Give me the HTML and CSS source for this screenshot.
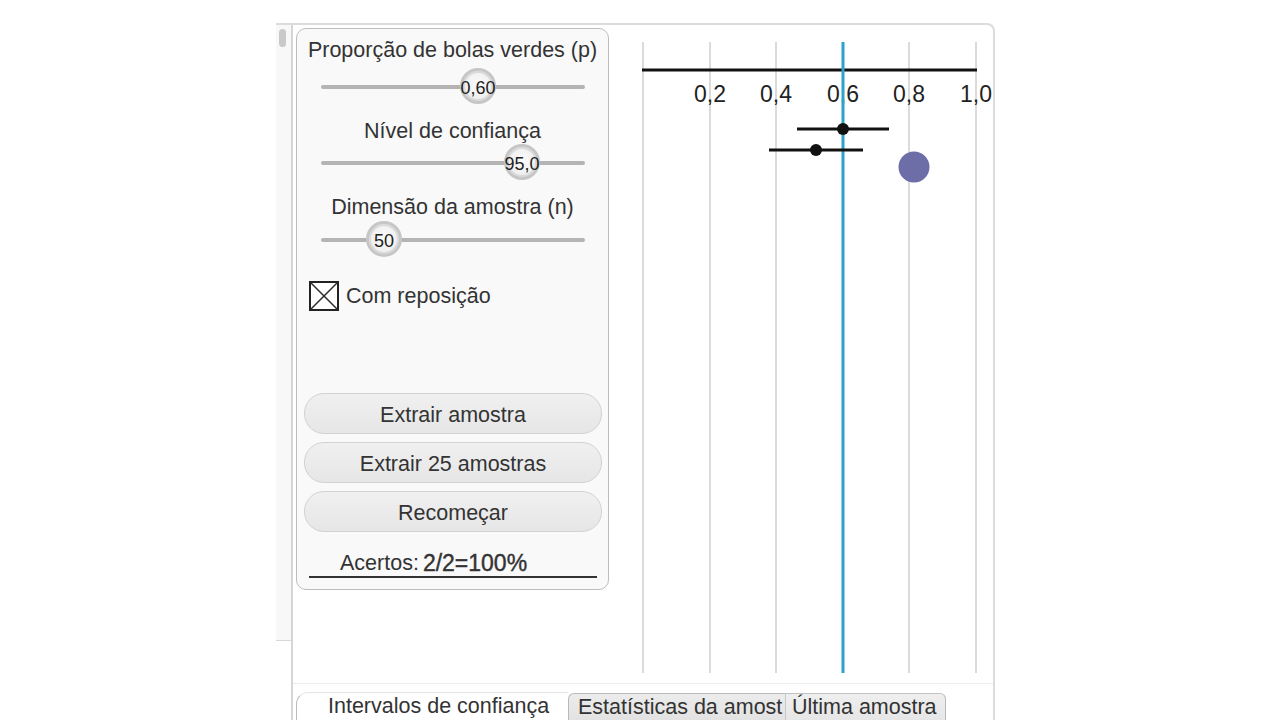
FILE: index.html
```html
<!DOCTYPE html>
<html lang="pt">
<head>
<meta charset="utf-8">
<title>Intervalos de confiança</title>
<link rel="stylesheet" href="styles.css">
</head>
<body>
<div class="app">
  <div class="strip">
    <div class="strip-top"><div class="thumb-bar"></div></div>
  </div>
  <div class="main">
    <div class="content">
      <div class="panel">
        <div class="label first">Proporção de bolas verdes (p)</div>
        <div class="slider s1">
          <div class="track"></div>
          <div class="knob" style="left:157px">0,60</div>
        </div>
        <div class="label">Nível de confiança</div>
        <div class="slider">
          <div class="track"></div>
          <div class="knob" style="left:201px">95,0</div>
        </div>
        <div class="label">Dimensão da amostra (n)</div>
        <div class="slider s3">
          <div class="track"></div>
          <div class="knob" style="left:63px">50</div>
        </div>
        <div class="check-row">
          <svg class="checkbox" width="30" height="30" viewBox="0 0 30 30">
            <rect x="1" y="1" width="28" height="28" fill="#fff" stroke="#222" stroke-width="2"/>
            <line x1="2" y1="2" x2="28" y2="28" stroke="#333" stroke-width="1.6"/>
            <line x1="28" y1="2" x2="2" y2="28" stroke="#333" stroke-width="1.6"/>
          </svg>
          <span class="check-label">Com reposição</span>
        </div>
        <div class="buttons">
          <button class="btn">Extrair amostra</button>
          <button class="btn">Extrair 25 amostras</button>
          <button class="btn">Recomeçar</button>
        </div>
        <div class="score">
          <span class="score-label">Acertos:</span><span class="score-value">2/2=100%</span>
        </div>
      </div>
      <svg class="chart" width="383" height="658" viewBox="0 0 383 658">
        <g stroke="#d2d2d2" stroke-width="1.6">
          <line x1="33" y1="17" x2="33" y2="648"/>
          <line x1="100" y1="17" x2="100" y2="648"/>
          <line x1="166" y1="17" x2="166" y2="648"/>
          <line x1="299" y1="17" x2="299" y2="648"/>
          <line x1="366" y1="17" x2="366" y2="648"/>
        </g>
        <line x1="32" y1="45" x2="367" y2="45" stroke="#111" stroke-width="3"/>
        <g class="ticks" font-family="'Liberation Sans', Arial, sans-serif" font-size="23" fill="#222" text-anchor="middle">
          <text x="100" y="77">0,2</text>
          <text x="166" y="77">0,4</text>
          <text x="233" y="77">0,6</text>
          <text x="299" y="77">0,8</text>
          <text x="366" y="77">1,0</text>
        </g>
        <line x1="233" y1="17" x2="233" y2="648" stroke="#2ea2cc" stroke-width="3"/>
        <line x1="187" y1="104" x2="279" y2="104" stroke="#111" stroke-width="3"/>
        <circle cx="233" cy="104" r="6" fill="#111"/>
        <line x1="159" y1="125" x2="253" y2="125" stroke="#111" stroke-width="3"/>
        <circle cx="206" cy="125" r="6" fill="#111"/>
        <circle cx="304" cy="142" r="15.5" fill="#6d6ea8"/>
      </svg>
    </div>
    <div class="tabs">
      <div class="tab active">Intervalos de confiança</div>
      <div class="tab second">Estatísticas da amost</div>
      <div class="tab third">Última amostra</div>
    </div>
  </div>
</div>
</body>
</html>
```
FILE: styles.css
```css
html, body {
  margin: 0;
  padding: 0;
  background: #fff;
  width: 1280px;
  height: 720px;
  overflow: hidden;
  font-family: "Liberation Sans", Arial, sans-serif;
  color: #333;
}

.app {
  margin-left: 276px;
  margin-top: 23px;
  width: 717px;
  height: 697px;
  display: flex;
  border-top: 2px solid #dcdcdc;
  border-right: 2px solid #dcdcdc;
  border-top-right-radius: 8px;
}

.strip {
  width: 15px;
  display: flex;
  flex-direction: column;
}

.strip-top {
  height: 611px;
  background: #f8f8f8;
  border-bottom: 1px solid #d8d8d8;
  padding: 4px 0 0 3px;
}

.thumb-bar {
  width: 7px;
  height: 18px;
  border-radius: 4px;
  background: #c9c9c9;
}

.main {
  flex: 1;
  border-left: 2px solid #d6d6d6;
  display: flex;
  flex-direction: column;
}

.content {
  height: 658px;
  display: flex;
  align-items: flex-start;
}

.panel {
  margin: 3px 0 0 3px;
  width: 311px;
  height: 560px;
  border: 1.5px solid #bdbdbd;
  border-radius: 10px;
  background: #f9f9f9;
  display: flex;
  flex-direction: column;
}

.label {
  font-size: 21.5px;
  line-height: 24px;
  height: 24px;
  text-align: center;
  margin-top: 12px;
  white-space: nowrap;
  color: #333;
}

.label.first {
  margin-top: 9px;
}

.slider {
  position: relative;
  height: 40px;
  margin-left: 24px;
  width: 264px;
}

.slider.s1 {
  margin-top: 5px;
}

.slider.s3 {
  margin-top: 1px;
}

.track {
  position: absolute;
  left: 0;
  right: 0;
  top: 18px;
  height: 4px;
  border-radius: 2px;
  background: #b4b4b4;
}

.knob {
  position: absolute;
  top: 1px;
  width: 30px;
  height: 30px;
  margin-left: -18px;
  border: 3px solid #c6c6c6;
  box-shadow: inset 0 0 0 2px #dadada;
  border-radius: 50%;
  background: radial-gradient(circle at 50% 45%, #fbfbfb 0%, #f0f0f0 60%, #e0e0e0 100%);
  font-size: 18px;
  line-height: 34px;
  text-align: center;
  color: #222;
  white-space: nowrap;
  display: flex;
  justify-content: center;
}

.check-row {
  display: flex;
  align-items: center;
  margin-top: 21px;
  margin-left: 12px;
  height: 30px;
}

.checkbox {
  display: block;
}

.check-label {
  font-size: 21.5px;
  margin-left: 7px;
  color: #333;
}

.buttons {
  display: flex;
  flex-direction: column;
  gap: 8px;
  margin-top: 82px;
  margin-left: 7px;
  width: 298px;
}

.btn {
  height: 41px;
  border: 1.5px solid #d2d2d2;
  border-radius: 20px;
  background: linear-gradient(#f0f0f0, #e6e6e6);
  font-family: "Liberation Sans", Arial, sans-serif;
  font-size: 21.5px;
  color: #333;
  padding: 3px 0 0 0;
  box-sizing: border-box;
}

.score {
  margin: 8px 0 0 12px;
  width: 288px;
  height: 38px;
  border-bottom: 2px solid #333;
  box-sizing: border-box;
  display: flex;
  align-items: flex-end;
  padding: 0 0 0 31px;
}

.score-label {
  font-size: 21.5px;
  line-height: 25px;
  margin-right: 4px;
  color: #333;
}

.score-value {
  font-size: 23px;
  line-height: 25px;
  color: #333;
  -webkit-text-stroke: 0.4px #333;
}

.chart {
  display: block;
  margin-left: auto;
}

.tabs {
  height: 36px;
  border-top: 1px solid #ececec;
  display: flex;
  align-items: flex-end;
}

.tab {
  height: 27px;
  font-size: 21.5px;
  line-height: 26px;
  white-space: nowrap;
  overflow: hidden;
  box-sizing: border-box;
  color: #333;
}

.tab.active {
  margin-left: 3px;
  width: 272px;
  padding-left: 31px;
  height: 28px;
  border-left: 1.5px solid #bcbcbc;
  border-top: 1.5px solid #e4e4e4;
  border-top-left-radius: 12px;
  background: #fff;
}

.tab.second {
  width: 218px;
  padding-left: 9px;
  background: linear-gradient(#ececec, #e2e2e2);
  border-top: 1px solid #b9b9b9;
  border-left: 1px solid #b9b9b9;
  border-right: 1px solid #c8c8c8;
  border-top-left-radius: 6px;
}

.tab.third {
  width: 160px;
  padding-left: 6px;
  background: linear-gradient(#efefef, #e6e6e6);
  border-top: 1px solid #c2c2c2;
  border-right: 1px solid #b9b9b9;
  border-top-right-radius: 6px;
}
```
